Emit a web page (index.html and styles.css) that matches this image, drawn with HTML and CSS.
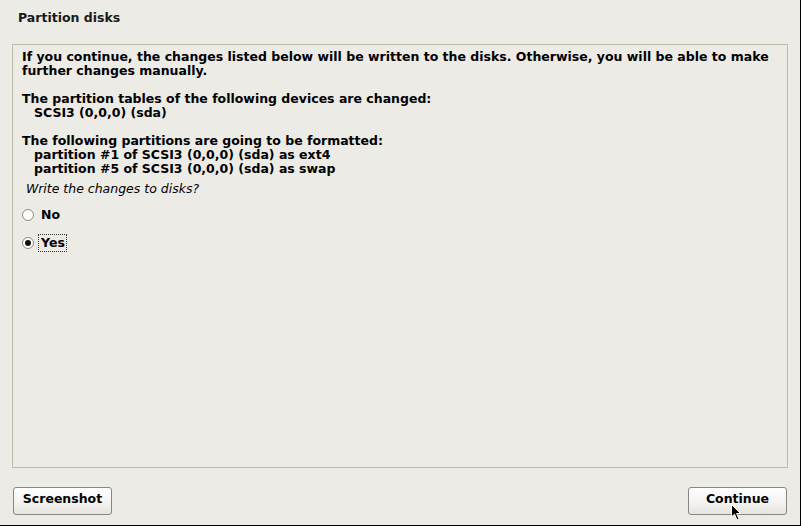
FILE: index.html
```html
<!DOCTYPE html>
<html>
<head>
<meta charset="utf-8">
<link rel="stylesheet" href="styles.css">
</head>
<body>
<div class="window">
  <div class="title">Partition disks</div>
  <div class="panel">
    <p class="msg">If you continue, the changes listed below will be written to the disks. Otherwise, you will be able to make further changes manually.</p>
    <p class="msg gap">The partition tables of the following devices are changed:</p>
    <p class="msg indent">SCSI3 (0,0,0) (sda)</p>
    <p class="msg gap">The following partitions are going to be formatted:</p>
    <p class="msg indent">partition #1 of SCSI3 (0,0,0) (sda) as ext4</p>
    <p class="msg indent">partition #5 of SCSI3 (0,0,0) (sda) as swap</p>
    <p class="question">Write the changes to disks?</p>
    <div class="options">
      <div class="option"><span class="radio"></span><span class="label">No</span></div>
      <div class="option"><span class="radio checked"></span><span class="label focus">Yes</span></div>
    </div>
  </div>
  <div class="buttons">
    <button class="btn">Screenshot</button>
    <button class="btn">Continue</button>
  </div>
  <svg class="cursor" width="12" height="18" viewBox="0 0 12 18"><path d="M0.5 0.5 L0.5 13 L3.5 10.2 L6 16 L8 15 L5.6 9.5 L9.5 9.5 Z" fill="#000" stroke="#fff" stroke-width="1"/></svg>
</div>
</body>
</html>
```
FILE: styles.css
```css
html, body {
  margin: 0;
  padding: 0;
  background: #000;
}
.window {
  position: relative;
  width: 800px;
  height: 525px;
  background: #edebe6;
  font-family: "DejaVu Sans", sans-serif;
  font-size: 12.5px;
  color: #000;
  display: flex;
  flex-direction: column;
  box-sizing: border-box;
}
.title {
  height: 44px;
  box-sizing: border-box;
  padding: 10px 0 0 18px;
  line-height: 16px;
  font-weight: bold;
  color: #1a1a1a;
}
.panel {
  margin-left: 12px;
  width: 776px;
  height: 424px;
  box-sizing: border-box;
  border: 1px solid #c1b9a9;
  padding: 5px 9px 0 9px;
}
.msg {
  margin: 0;
  font-weight: bold;
  line-height: 14px;
}
.gap {
  margin-top: 14px;
}
.indent {
  padding-left: 12px;
}
.question {
  margin: 6px 0 0 4px;
  font-style: italic;
  line-height: 14px;
}
.options {
  display: flex;
  flex-direction: column;
  gap: 8px;
  margin-top: 9px;
}
.option {
  display: flex;
  align-items: center;
  height: 20px;
  gap: 4px;
}
.radio {
  width: 10px;
  height: 10px;
  border: 1px solid #8f8a82;
  border-radius: 50%;
  background: #fff;
  position: relative;
}
.radio.checked::after {
  content: "";
  position: absolute;
  left: 2px;
  top: 2px;
  width: 6px;
  height: 6px;
  border-radius: 50%;
  background: #111;
}
.label {
  font-weight: bold;
  padding: 1px 1px 1px 2px;
  line-height: 14px;
  border: 1px dotted transparent;
}
.label.focus {
  border-color: #333;
}
.buttons {
  display: flex;
  justify-content: space-between;
  padding: 19px 13px 0 13px;
}
.btn {
  width: 99px;
  height: 28px;
  box-sizing: border-box;
  border: 1px solid #8a8680;
  border-radius: 3px;
  background: linear-gradient(#ffffff, #f4f2ef 60%, #e6e3de);
  font-family: "DejaVu Sans", sans-serif;
  font-size: 12.5px;
  font-weight: bold;
  color: #000;
  padding: 0 0 5px 0;
}
.cursor {
  position: absolute;
  left: 731px;
  top: 504px;
}
```
